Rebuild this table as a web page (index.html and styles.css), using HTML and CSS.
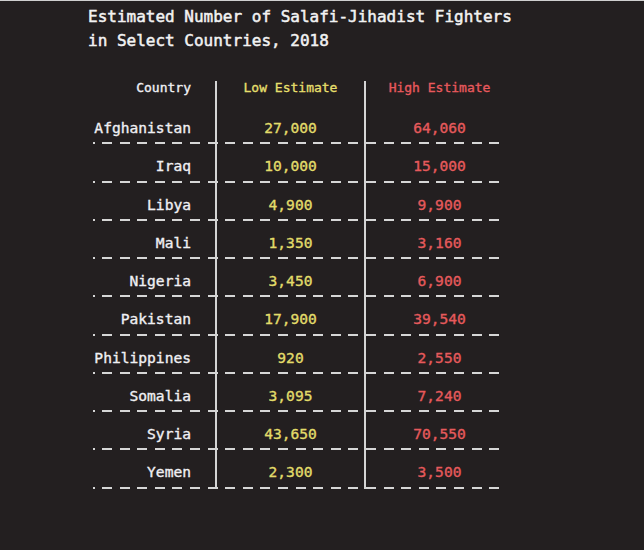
FILE: index.html
```html
<!DOCTYPE html>
<html>
<head>
<meta charset="utf-8">
<link rel="stylesheet" href="styles.css">
</head>
<body>
<div class="page">
  <h1 class="title">Estimated Number of Salafi-Jihadist Fighters<br>in Select Countries, 2018</h1>
  <div class="table">
    <div class="row head">
      <div class="cell country">Country</div>
      <div class="cell low">Low Estimate</div>
      <div class="cell high">High Estimate</div>
    </div>
    <div class="row data"><div class="cell country">Afghanistan</div><div class="cell low">27,000</div><div class="cell high">64,060</div></div>
    <div class="row data"><div class="cell country">Iraq</div><div class="cell low">10,000</div><div class="cell high">15,000</div></div>
    <div class="row data"><div class="cell country">Libya</div><div class="cell low">4,900</div><div class="cell high">9,900</div></div>
    <div class="row data"><div class="cell country">Mali</div><div class="cell low">1,350</div><div class="cell high">3,160</div></div>
    <div class="row data"><div class="cell country">Nigeria</div><div class="cell low">3,450</div><div class="cell high">6,900</div></div>
    <div class="row data"><div class="cell country">Pakistan</div><div class="cell low">17,900</div><div class="cell high">39,540</div></div>
    <div class="row data"><div class="cell country">Philippines</div><div class="cell low">920</div><div class="cell high">2,550</div></div>
    <div class="row data"><div class="cell country">Somalia</div><div class="cell low">3,095</div><div class="cell high">7,240</div></div>
    <div class="row data"><div class="cell country">Syria</div><div class="cell low">43,650</div><div class="cell high">70,550</div></div>
    <div class="row data"><div class="cell country">Yemen</div><div class="cell low">2,300</div><div class="cell high">3,500</div></div>
  </div>
</div>
</body>
</html>
```
FILE: styles.css
```css
html, body {
  margin: 0;
  padding: 0;
  background: #231f20;
}
.page {
  width: 644px;
  height: 549px;
  border-top: 1px solid #cfcfcf;
  background: #231f20;
  font-family: "DejaVu Sans Mono", "Liberation Mono", monospace;
  color: #f0f0f2;
  padding-top: 4px;
  box-sizing: border-box;
  -webkit-text-stroke: 0.35px currentColor;
}
.title {
  margin: 0 0 0 88px;
  font-size: 16px;
  font-weight: normal;
  line-height: 24px;
  color: #f2f2f2;
  -webkit-text-stroke: 0.5px currentColor;
}
.table {
  margin: 28px 0 0 87px;
  width: 426px;
}
.row {
  display: grid;
  grid-template-columns: 128px 149px 149px;
}
.head {
  height: 25px;
  font-size: 13px;
  line-height: 14px;
}
.data {
  height: 38.25px;
  font-size: 14.6px;
  line-height: 20px;
  background:
    linear-gradient(#d6d6d6, #d6d6d6) no-repeat 6px 100% / 2px 2px,
    repeating-linear-gradient(90deg, #d6d6d6 0 10px, transparent 10px 17.6px) no-repeat 15px 100% / 401px 2px;
}
.data .cell {
  padding-top: 12px;
}
.cell {
  box-sizing: border-box;
}
.country {
  text-align: right;
  padding-right: 24px;
  color: #f0f0f4;
}
.low, .high {
  text-align: center;
  border-left: 2px solid #d4d4d4;
}
.low {
  color: #e2dc6a;
}
.high {
  color: #e65a5c;
}
.head .low { color: #e6df6c; }
.head .high { color: #e8595d; }
```
